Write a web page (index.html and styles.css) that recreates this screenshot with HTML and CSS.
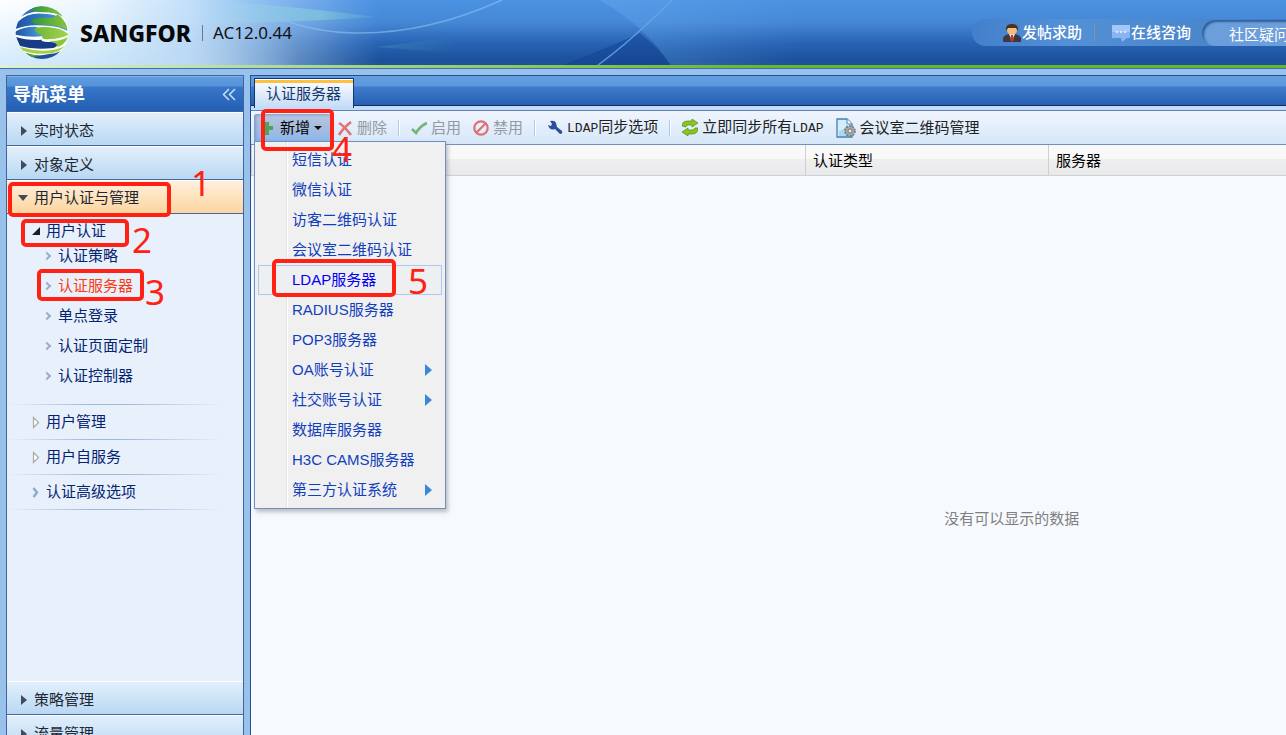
FILE: index.html
```html
<!DOCTYPE html>
<html lang="zh-CN">
<head>
<meta charset="utf-8">
<title>SANGFOR AC12.0.44</title>
<link rel="stylesheet" href="styles.css">
</head>
<body>
<header class="topbar">
  <svg class="topbar-art" width="1286" height="65" viewBox="0 0 1286 65" aria-hidden="true">
    <defs>
      <linearGradient id="fade"><stop offset="0" stop-color="#fff"/><stop offset=".25" stop-color="#f6fcff" stop-opacity=".95"/><stop offset=".5" stop-color="#dff1ff" stop-opacity=".82"/><stop offset=".7" stop-color="#c3e0fa" stop-opacity=".55"/><stop offset=".85" stop-color="#b6d6f6" stop-opacity=".3"/><stop offset="1" stop-color="#9cc5f0" stop-opacity="0"/></linearGradient>
      <linearGradient id="lower" x2="0" y2="1"><stop offset="0" stop-color="#b8e0fb" stop-opacity="0"/><stop offset="1" stop-color="#b8dcfa" stop-opacity=".6"/></linearGradient>
      <linearGradient id="lowfade"><stop offset="0" stop-color="#fff"/><stop offset=".6" stop-color="#fff"/><stop offset="1" stop-color="#000"/></linearGradient>
      <mask id="lowmask"><rect width="300" height="65" fill="url(#lowfade)"/></mask>
      <linearGradient id="teal"><stop offset="0" stop-color="#a8e8f0" stop-opacity="0"/><stop offset=".7" stop-color="#8bd8d8" stop-opacity=".5"/><stop offset="1" stop-color="#5fa8d0" stop-opacity=".4"/></linearGradient>
      <linearGradient id="green"><stop offset="0" stop-color="#4aa0b8" stop-opacity=".35"/><stop offset="1" stop-color="#4aa0b8" stop-opacity="0"/></linearGradient>
      <linearGradient id="shine"><stop offset="0" stop-color="#6fb0f0" stop-opacity=".35"/><stop offset=".5" stop-color="#6fb0f0" stop-opacity="0"/></linearGradient>
    </defs>
    <path d="M600 0Q650 30 670 65H1000V0z" fill="url(#shine)"/>
    <path d="M563 65Q610 47 640 33Q660 50 671 65z" fill="#123f90" opacity=".5"/>
    <rect width="380" height="65" fill="url(#fade)"/>
    <rect width="300" height="65" fill="url(#lower)" mask="url(#lowmask)"/>
    <path d="M190 0Q260 2 376 17Q300 22 200 24z" fill="url(#teal)"/>
    <path d="M376 47L455 37V53z" fill="url(#green)"/>
    <path d="M250 0C300 42 400 46 502 0" fill="none" stroke="#8fc2f4" stroke-width="1.5" opacity=".6"/>
    <path d="M598 65Q630 42 672 0" fill="none" stroke="#6aa6ea" stroke-width="1.5" opacity=".8"/>
  </svg>
  <div class="brand">
    <svg class="globe" viewBox="45 18 162 162" aria-hidden="true">
      <defs>
        <clipPath id="ball"><circle cx="126" cy="98" r="79"/></clipPath>
        <linearGradient id="gb"><stop offset="0" stop-color="#1c4ea0"/><stop offset="1" stop-color="#4ea6e4"/></linearGradient>
        <linearGradient id="gg"><stop offset="0" stop-color="#2f9440"/><stop offset="1" stop-color="#8cc63a"/></linearGradient>
        <linearGradient id="gl"><stop offset="0" stop-color="#6db53c"/><stop offset="1" stop-color="#a9d44a"/></linearGradient>
      </defs>
      <g clip-path="url(#ball)">
        <rect x="45" y="18" width="162" height="162" fill="#fff"/>
        <path d="M62 50Q90 20 126 18L168 33L190 50Q160 34 125 34Q95 34 62 50z" fill="#2f74c0"/>
        <path d="M98 18H150Q175 28 190 50Q165 36 128 37Q96 36 96 27z" fill="url(#gg)"/>
        <path d="M53 66Q82 38 126 41Q180 40 198 72Q202 88 202 93Q180 80 145 77L113 76Q82 74 45 88z" fill="url(#gb)"/>
        <path d="M94 61Q110 50 145 54Q166 54 172 43Q192 54 203 88Q170 75 131 75Q95 74 94 61z" fill="url(#gg)"/>
        <path d="M43 96Q75 78 112 81Q106 88 112 94Q127 100 132 108Q90 114 46 104z" fill="url(#gb)"/>
        <path d="M103 87Q112 79 148 82Q183 84 207 103Q187 116 146 118Q121 118 127 107Q107 101 103 87z" fill="url(#gl)"/>
        <path d="M48 111Q82 122 126 119Q120 125 145 126Q172 125 172 132Q172 140 160 144Q105 151 60 138z" fill="#173c83"/>
        <path d="M148 124Q180 124 204 111Q194 136 170 142Q178 130 148 124z" fill="#8cc63a"/>
        <path d="M59 141Q105 155 150 151Q176 148 195 137Q181 155 154 160Q106 165 68 152z" fill="#a4cf40"/>
        <path d="M76 159Q111 171 143 163Q168 161 181 154Q158 180 126 180Q97 178 76 158z" fill="#1f509b"/>
        <path d="M76 158Q98 166 122 166Q115 171 91 170z" fill="#4da740"/>
      </g>
    </svg>
    <strong class="brand-name">SANGFOR</strong>
    <span class="version">AC12.0.44</span>
  </div>
  <nav class="toplinks">
    <a class="toplink" href="#">
      <svg width="20" height="18" viewBox="0 0 20 18" aria-hidden="true"><path d="M1 18v-4q1-3 6-4h6q5 1 6 4v4z" fill="#3a3944"/><path d="M7 10l3 7 3-7z" fill="#fff"/><path d="M9 11h2l1 5-2 2-2-2z" fill="#c03a2b"/><circle cx="10" cy="6" r="5" fill="#f1bd82"/><path d="M4 7Q3 0 10 0t6 7l-2-3H6z" fill="#49321f"/></svg>
      发帖求助</a>
    <span class="toplink-sep"></span>
    <a class="toplink" href="#">
      <svg width="20" height="18" viewBox="0 0 20 18" aria-hidden="true"><path d="M1 1h18v13h-3l-5 4-1-4H1z" fill="#8ab3f4"/><path d="M1 1h18v7H1z" fill="#a6c7fa"/><path d="M5 8h2m2 0h2m2 0h2" stroke="#f4f8ff" stroke-width="1.5"/></svg>
      在线咨询</a>
    <a class="topsearch" href="#">社区疑问</a>
  </nav>
</header>

<div class="workspace">
  <aside class="sidebar">
    <div class="sidebar-title">
      <h2>导航菜单</h2>
      <button class="collapse" type="button" aria-label="收起"><svg width="14" height="13" viewBox="0 0 14 13"><path d="M7 1L1.500 6.500 7 12M13 1L7.500 6.500 13 12" fill="none" stroke="#c8dff8" stroke-width="1.500"/></svg></button>
    </div>
    <button class="section" type="button"><i class="tri right"></i>实时状态</button>
    <button class="section" type="button"><i class="tri right"></i>对象定义</button>
    <button class="section open" type="button"><i class="tri down"></i>用户认证与管理</button>
    <nav class="tree">
      <div class="group first">
        <a class="node" href="#"><svg width="9" height="8" viewBox="0 0 9 8"><path d="M8 0v8H0z" fill="#1b1d24"/></svg>用户认证</a>
        <a class="leaf" href="#"><i class="chev"></i>认证策略</a>
        <a class="leaf current" href="#"><i class="chev"></i>认证服务器</a>
        <a class="leaf" href="#"><i class="chev"></i>单点登录</a>
        <a class="leaf" href="#"><i class="chev"></i>认证页面定制</a>
        <a class="leaf" href="#"><i class="chev"></i>认证控制器</a>
      </div>
      <div class="group"><a class="node" href="#"><svg width="9" height="13" viewBox="0 0 9 13"><path d="M1.500 1.500v10l5-5z" fill="#fff" stroke="#aaa9a9" stroke-width="1.200"/></svg>用户管理</a></div>
      <div class="group"><a class="node" href="#"><svg width="9" height="13" viewBox="0 0 9 13"><path d="M1.500 1.500v10l5-5z" fill="#fff" stroke="#aaa9a9" stroke-width="1.200"/></svg>用户自服务</a></div>
      <div class="group"><a class="node" href="#"><svg width="9" height="11" viewBox="0 0 9 11"><path d="M1.500 1L5 5.500 1.500 10" fill="none" stroke="#91a8c9" stroke-width="2.400"/></svg>认证高级选项</a></div>
    </nav>
    <button class="section" type="button"><i class="tri right"></i>策略管理</button>
    <button class="section" type="button"><i class="tri right"></i>流量管理</button>
  </aside>

  <main class="panel">
    <div class="tabs"><button class="tab" type="button">认证服务器</button></div>
    <div class="toolbar">
      <button class="tool pressed" type="button"><svg width="16" height="16" viewBox="0 0 16 16"><path d="M5 2h4v4h4v4H9v5H5v-5H1V6h4z" fill="#4fa35b"/></svg>新增<i class="caret"></i></button>
      <button class="tool" type="button" disabled><svg width="16" height="16" viewBox="0 0 16 16"><path d="M2 3q5 3 12 12M14 2Q6 8 2 15" fill="none" stroke="#dd7375" stroke-width="2.600"/></svg>删除</button>
      <span class="sep"></span>
      <button class="tool" type="button" disabled><svg width="16" height="16" viewBox="0 0 16 16"><path d="M1 9l4 4Q9 6 16 3" fill="none" stroke="#77b37c" stroke-width="2.600"/></svg>启用</button>
      <button class="tool" type="button" disabled><svg width="16" height="16" viewBox="0 0 16 16"><circle cx="8" cy="8" r="6.700" fill="none" stroke="#df7072" stroke-width="2.200"/><path d="M3.500 12.500l9-9" stroke="#df7072" stroke-width="2.200"/></svg>禁用</button>
      <span class="sep"></span>
      <button class="tool" type="button"><svg width="16" height="16" viewBox="0 0 16 16"><path d="M1 5l3 1 1-2-2-3q5-1 6 2l1 4 5 4q1 3-2 3l-5-5Q3 11 1 5z" fill="#2c4f9b"/></svg><span><span class="latin">LDAP</span>同步选项</span></button>
      <span class="sep"></span>
      <button class="tool" type="button"><svg width="16" height="17" viewBox="0 0 16 17"><path d="M0 7Q0 2 6 2h4V0l6 4-6 4V6H6Q4 6 4 8z" fill="#8bc51c" stroke="#4f8d14" stroke-width=".7"/><path d="M16 9q0 6-6 6H6v2l-6-4 6-4v2h4q2 0 3-2z" fill="#8bc51c" stroke="#4f8d14" stroke-width=".7"/></svg><span>立即同步所有<span class="latin">LDAP</span></span></button>
      <button class="tool" type="button"><svg width="20" height="20" viewBox="0 0 20 20"><path d="M1 1h10l5 5v13H1z" fill="#d4edfa" stroke="#3d83ad" stroke-width="1.300"/><path d="M11 1v5h5" fill="#fff" stroke="#3d83ad"/><path d="M3 13q5-1 9-8v13H3z" fill="#a9d7ef"/><circle cx="14" cy="13" r="5" fill="#a6a9ac" stroke="#75787c" stroke-width="1.600" stroke-dasharray="2 1.140"/><circle cx="14" cy="13" r="2" fill="#eee" stroke="#777"/></svg>会议室二维码管理</button>

      <ul class="menu">
        <li><a href="#">短信认证</a></li>
        <li><a href="#">微信认证</a></li>
        <li><a href="#">访客二维码认证</a></li>
        <li><a href="#">会议室二维码认证</a></li>
        <li><a class="hover" href="#">LDAP服务器</a></li>
        <li><a href="#">RADIUS服务器</a></li>
        <li><a href="#">POP3服务器</a></li>
        <li><a class="sub" href="#">OA账号认证</a></li>
        <li><a class="sub" href="#">社交账号认证</a></li>
        <li><a href="#">数据库服务器</a></li>
        <li><a href="#">H3C CAMS服务器</a></li>
        <li><a class="sub" href="#">第三方认证系统</a></li>
      </ul>
    </div>
    <table class="grid">
      <thead><tr><th class="col-name"></th><th class="col-type">认证类型</th><th>服务器</th></tr></thead>
    </table>
    <div class="empty">没有可以显示的数据</div>
  </main>
</div>

<div class="marks">
  <span class="box box1"></span><span class="num num1">1</span>
  <span class="box box2"></span><span class="num num2">2</span>
  <span class="box box3"></span><span class="num num3">3</span>
  <span class="box box4"></span><span class="num num4">4</span>
  <span class="box box5"></span><span class="num num5">5</span>
</div>
</body>
</html>
```
FILE: styles.css
```css
* { box-sizing: border-box; }
body {
  margin: 0;
  height: 100vh;
  display: flex;
  flex-direction: column;
  overflow: hidden;
  background: #98c1ec;
  color: #222;
  font: 15px/20px "Liberation Sans", "Noto Sans CJK SC", sans-serif;
}
button { font: inherit; color: inherit; border: 0; background: none; padding: 0; margin: 0; text-align: left; }
a { color: inherit; text-decoration: none; }
h2 { margin: 0; }
svg { flex: none; display: block; }

/* Top bar */
.topbar {
  position: relative;
  flex: none;
  height: 69px;
  display: flex;
  align-items: flex-start;
  justify-content: space-between;
  overflow: hidden;
  background:
    linear-gradient(#3f6fb4, #3f6fb4) 0 68px / 100% 1px no-repeat,
    linear-gradient(90deg, #dff2d4, #a8d88c 25%, #68b62c 60%) 0 65px / 100% 3px no-repeat,
    linear-gradient(#4b92e3, #4588d6 22px, #2762b2 44px, #1c519b 60px);
}
.topbar-art { position: absolute; left: 0; top: 0; }
.brand { position: relative; display: flex; align-items: center; height: 66px; padding-left: 15px; }
.globe { width: 54px; height: 54px; }
.brand-name { margin-left: 11px; font: 800 23px/32px "Noto Sans", "Open Sans", sans-serif; color: #080808; }
.version { margin-left: 11px; padding-left: 10px; border-left: 1px solid #667a90; font: 17px/16px "Noto Sans", sans-serif; color: #111; }
.toplinks {
  position: relative;
  display: flex;
  align-items: center;
  width: 314px;
  height: 27px;
  margin-top: 19px;
  padding-left: 30px;
  border-radius: 14px 0 0 14px;
  background: linear-gradient(90deg, #4380cb, #5490d6 30%, #4280c6);
  color: #fff;
  white-space: nowrap;
}
.toplink { flex: none; display: flex; align-items: center; font-weight: 500; }
.toplink-sep { flex: none; width: 1px; height: 16px; margin: 0 16px 0 12px; background: #8593a4; }
.topsearch {
  flex: 1;
  min-width: 0;
  margin-left: 11px;
  padding: 5px 0 1px 27px;
  height: 26px;
  border-radius: 13px 0 0 13px;
  background: #6c9edb;
  box-shadow: inset 2px 2px 2px #315f9e;
}

/* Workspace */
.workspace { flex: 1; min-height: 0; display: flex; gap: 6px; padding: 6px 0 0 6px; }
.sidebar {
  flex: none;
  width: 238px;
  display: flex;
  flex-direction: column;
  overflow: hidden;
  margin-bottom: -15px;
  border: 1px solid #40649b;
  background: #e8f0fc;
}
.sidebar-title {
  flex: none;
  display: flex;
  align-items: center;
  justify-content: space-between;
  height: 36px;
  padding: 2px 7px 0 6px;
  border-bottom: 1px solid #40649b;
  box-shadow: inset 0 1px #7fb3ea;
  background: linear-gradient(#609de0, #5793da 10px, #3876c8 11px, #235fb4);
  color: #fff;
}
.sidebar-title h2 { font-size: 18px; line-height: 20px; font-weight: 700; }
.section {
  flex: none;
  display: flex;
  align-items: center;
  height: 34px;
  padding: 3px 0 0 13px;
  border-top: 1px solid #fbfdff;
  border-bottom: 1px solid #46679a;
  background: linear-gradient(#e2effb, #b9d8f3);
  color: #1c2733;
}
.section.open { padding-top: 1px; background: linear-gradient(#fff0dc, #fcd5a0); }
.tri { flex: none; width: 0; height: 0; border: 5px solid transparent; }
.tri.right { margin: 0 7px 0 1px; border-left: 6px solid #414b59; border-right: 0; }
.tri.down { margin: 0 6px 0 -2px; border-top: 6px solid #414b59; border-bottom: 0; }
.tree { flex: 1; color: #04246e; }
.group {
  height: 35px;
  padding: 7px 0 0 25px;
  background: linear-gradient(90deg, transparent, #9fb9dc 35%, #9fb9dc 50%, transparent 92%) 0 100% / 100% 1px no-repeat;
}
.group.first { height: auto; padding-bottom: 14px; }
.node { display: flex; align-items: center; gap: 5px; height: 20px; }
.leaf { display: flex; align-items: center; gap: 8px; height: 30px; padding-left: 12px; }
.chev { width: 6px; height: 6px; border: solid #9eb0c9; border-width: 2px 2px 0 0; transform: rotate(45deg); }
.leaf.current { color: #fc3b10; }

/* Main panel */
.panel { flex: 1; min-width: 0; display: flex; flex-direction: column; border: 1px solid #24508e; border-width: 1px 0 0 1px; background: #f6fafe; }
.tabs {
  flex: none;
  height: 35px;
  display: flex;
  align-items: flex-start;
  padding: 2px 0 0 3px;
  border-bottom: 1px solid #5f82b4;
  background:
    linear-gradient(#0c2d66, #0c2d66) 0 29px / 100% 1px no-repeat,
    linear-gradient(#c3dbf8, #c3dbf8) 0 30px / 100% 5px no-repeat,
    linear-gradient(#659fe2, #5b97dc 10px, #3f7bcc 11px, #275fb1 29px);
}
.tab {
  height: 30px;
  padding: 1px 12px 0 11px;
  border: 1px solid #12366f;
  border-bottom: 0;
  background: linear-gradient(#fff, #fff) 0 0 / 100% 1px no-repeat, linear-gradient(#fec13f, #fec13f) 0 1px / 100% 3px no-repeat, linear-gradient(#fff, #c3dbf8);
  color: #15366c;
}
.toolbar {
  position: relative;
  flex: none;
  display: flex;
  align-items: center;
  height: 34px;
  padding-left: 3px;
  border-bottom: 1px solid #6f91c0;
  background: linear-gradient(#f0f5fe, #d6e7f8);
  white-space: nowrap;
}
.tool { display: flex; align-items: center; gap: 4px; height: 27px; padding: 0 6px; color: #222; }
.tool:disabled { color: #949aa3; }
.tool.pressed { padding-right: 9px; border-radius: 3px 3px 0 0; background: linear-gradient(#b5c7e2, #a8bcdd 50%, #8cb8ee); box-shadow: inset 2px 1px 3px #7f9dc8; color: #000; }
.latin { font-family: "Liberation Mono", monospace; font-size: 13px; }
.caret { border: 4px solid transparent; border-top-color: #111; border-bottom: 0; }
.sep { flex: none; width: 2px; height: 16px; margin: 0 5px; background: #a9cbf5; border-right: 1px solid #fff; }
.grid { flex: none; width: 100%; table-layout: fixed; border-collapse: separate; border-spacing: 0; }
.grid th {
  height: 31px;
  padding: 2px 0 0 7px;
  text-align: left;
  font-weight: 400;
  color: #000;
  border-left: 1px solid #d0d0d0;
  border-bottom: 1px solid #d0d0d0;
  background: linear-gradient(#f9f9f9 45%, #efeff0 46%, #e8e9eb);
}
.col-name { width: 554px; }
.col-type { width: 243px; }
.empty { flex: 1; display: flex; align-items: center; justify-content: center; padding: 126px 0 0 47%; color: #808080; }

/* Drop-down menu */
.menu {
  position: absolute;
  z-index: 2;
  left: 3px;
  top: 30px;
  width: 192px;
  margin: 0;
  padding: 3px;
  list-style: none;
  border: 1px solid #6d8fc4;
  box-shadow: 2px 3px 4px #8888;
  background: linear-gradient(90deg, transparent 31px, #e2e2e2 31px, #e2e2e2 32px, #fff 32px, #fff 33px, transparent 33px) #f0f0f0;
  color: #1240bd;
}
.menu a { display: flex; align-items: center; justify-content: space-between; height: 30px; padding: 0 9px 0 33px; border: 1px solid transparent; }
.menu .hover { border-color: #adc9f1; background: #eeeff0; color: #0500ef; }
.menu .sub::after { content: ""; border: 6px solid transparent; border-left: 7px solid #3c87d7; border-right: 0; }

/* Numbered callouts drawn over the page */
.marks { position: absolute; z-index: 3; left: 0; top: 0; pointer-events: none; color: #ff2114; }
.box { position: absolute; border: 4px solid #ff2114; border-radius: 5px; }
.num { position: absolute; font: 35px/36px "Noto Sans", sans-serif; }
.box1 { left: 8px; top: 182px; width: 163px; height: 35px; }
.num1 { left: 191px; top: 165px; }
.box2 { left: 21px; top: 219px; width: 108px; height: 28px; }
.num2 { left: 132px; top: 222px; }
.box3 { left: 37px; top: 269px; width: 107px; height: 32px; }
.num3 { left: 145px; top: 274px; }
.box4 { left: 261px; top: 109px; width: 73px; height: 42px; }
.num4 { left: 332px; top: 131px; }
.box5 { left: 272px; top: 259px; width: 124px; height: 38px; }
.num5 { left: 408px; top: 263px; }
```
